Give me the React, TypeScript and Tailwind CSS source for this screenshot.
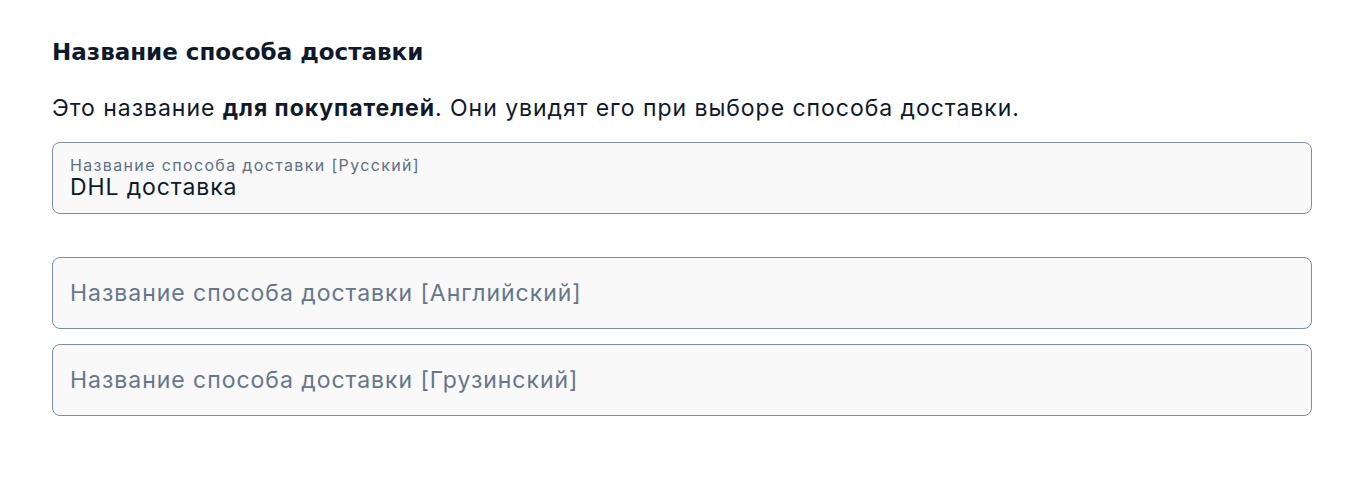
const fields = [
  { label: "Название способа доставки [Русский]", value: "DHL доставка" },
  { label: "Название способа доставки [Английский]", value: "" },
  { label: "Название способа доставки [Грузинский]", value: "" },
];

function FloatingField({ label, value }: { label: string; value: string }) {
  return (
    <div className="flex h-[72px] w-full flex-col justify-center rounded-lg border border-[#7d8ea3] bg-[#f9f9f9] px-[17px]">
      {value ? (
        <>
          <span className="text-[16px] leading-[18px] tracking-[1.35px] text-[#5f6f84]">{label}</span>
          <span className="text-[23px] leading-[27px] tracking-[0.9px] text-[#0e1a2b]">{value}</span>
        </>
      ) : (
        <span className="text-[23px] leading-[27px] tracking-[0.97px] text-[#66768b]">{label}</span>
      )}
    </div>
  );
}

export default function App() {
  return (
    <div className="min-h-screen bg-white px-[52px] pt-[37px] font-['Inter',sans-serif] text-[#0e1a2b]">
      <h2 className="font-['DejaVu_Sans',sans-serif] text-[23px] font-bold leading-[30px]">Название способа доставки</h2>
      <p className="mt-[26px] text-[23px] leading-[30px] tracking-[0.96px]">
        Это название <b className="font-bold">для покупателей</b>. Они увидят его при выборе способа доставки.
      </p>
      <div className="mt-[19px] w-[1260px]">
        <FloatingField {...fields[0]} />
        <div className="mt-[43px] flex flex-col gap-[15px]">
          <FloatingField {...fields[1]} />
          <FloatingField {...fields[2]} />
        </div>
      </div>
    </div>
  );
}
